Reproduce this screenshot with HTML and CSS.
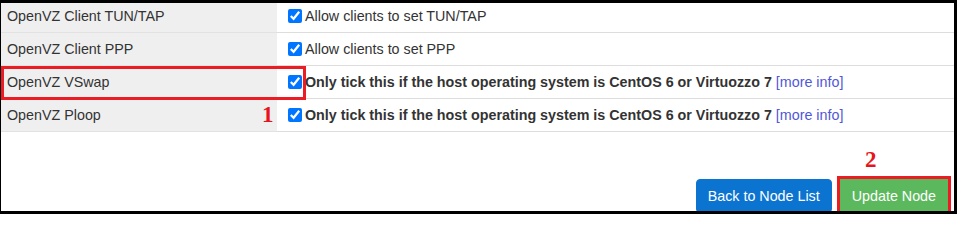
FILE: index.html
```html
<!DOCTYPE html>
<html>
<head>
<meta charset="utf-8">
<link rel="stylesheet" href="styles.css">
</head>
<body>
<div class="frame">
  <table class="settings">
    <tr>
      <td class="label">OpenVZ Client TUN/TAP</td>
      <td class="value"><label><input type="checkbox" checked>Allow clients to set TUN/TAP</label></td>
    </tr>
    <tr>
      <td class="label">OpenVZ Client PPP</td>
      <td class="value"><label><input type="checkbox" checked>Allow clients to set PPP</label></td>
    </tr>
    <tr>
      <td class="label">OpenVZ VSwap</td>
      <td class="value"><label><input type="checkbox" checked><b>Only tick this if the host operating system is CentOS 6 or Virtuozzo 7</b></label> <a href="#" class="more">[more info]</a></td>
    </tr>
    <tr>
      <td class="label">OpenVZ Ploop</td>
      <td class="value"><label><input type="checkbox" checked><b>Only tick this if the host operating system is CentOS 6 or Virtuozzo 7</b></label> <a href="#" class="more">[more info]</a></td>
    </tr>
  </table>
  <div class="actions">
    <button class="btn btn-primary">Back to Node List</button>
    <button class="btn btn-success marked">Update Node</button>
  </div>
  <div class="mark-box"></div>
  <span class="mark-num mark-1">1</span>
  <span class="mark-num mark-2">2</span>
</div>
</body>
</html>
```

FILE: styles.css
```css
html, body {
  margin: 0;
  padding: 0;
  background: #fff;
}

.frame {
  position: relative;
  width: 957px;
  height: 214px;
  overflow: hidden;
  background: #fff;
  font-family: "Liberation Sans", Arial, sans-serif;
  font-size: 14.3px;
  color: #333;
}

.frame::after {
  content: "";
  position: absolute;
  inset: 0;
  border-style: solid;
  border-color: #000;
  border-width: 3px 3px 3px 1px;
  pointer-events: none;
}

.settings {
  width: 954px;
  border-collapse: collapse;
}

.settings td {
  height: 32px;
  padding: 0;
  border-bottom: 1px solid #dddddd;
  vertical-align: middle;
  line-height: 20px;
}

.settings td.label {
  width: 270px;
  padding-left: 7px;
  background: #efefef;
  border-bottom-color: #e2e2e2;
}

.settings td.value {
  padding-left: 11px;
}

.settings input[type="checkbox"] {
  width: 14px;
  height: 14px;
  margin: 0 3px 0 0;
  vertical-align: -2px;
}

.settings b {
  font-weight: bold;
}

.more {
  color: #5157d8;
  text-decoration: none;
}

.actions {
  display: flex;
  justify-content: flex-end;
  gap: 8px;
  padding: 47px 9px 0 0;
}

.btn {
  font-family: "Liberation Sans", Arial, sans-serif;
  font-size: 14.3px;
  line-height: 20px;
  padding: 6px 11px;
  border: 1px solid transparent;
  border-radius: 4px;
  color: #fff;
  cursor: pointer;
}

.btn-primary {
  background: #0b73d0;
  border-color: #0b73d0;
}

.btn-success {
  background: #5cb85c;
  border-color: #5cb85c;
  border-radius: 0;
}

.marked {
  outline: 3px solid #ec1c24;
  outline-offset: 0;
}

.mark-box {
  position: absolute;
  left: 1px;
  top: 66px;
  width: 305px;
  height: 34px;
  box-sizing: border-box;
  border: 3px solid #ec1c24;
}

.mark-num {
  position: absolute;
  font-family: "Liberation Serif", "Times New Roman", serif;
  font-weight: bold;
  font-size: 23px;
  line-height: 22px;
  color: #e8141b;
}

.mark-1 {
  left: 262px;
  top: 104px;
}

.mark-2 {
  left: 865px;
  top: 149px;
}
```
